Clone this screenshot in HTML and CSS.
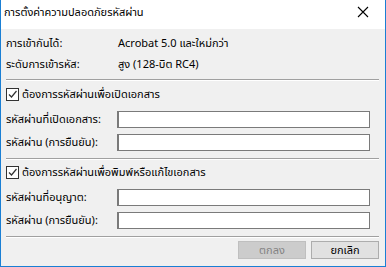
FILE: index.html
```html
<!DOCTYPE html>
<html>
  <head>
    <meta charset="utf-8" />
    <title>การตั้งค่าความปลอดภัยรหัสผ่าน</title>
    <link rel="stylesheet" href="styles.css">
  </head>
  <body>
    <div class="window">
      <div class="titlebar">
        <span class="title">การตั้งค่าความปลอดภัยรหัสผ่าน</span>
        <svg class="close" width="12" height="12" viewBox="0 0 12 12">
          <path d="M1 1 L11 11 M11 1 L1 11" stroke="#000" stroke-width="1.1" fill="none" />
        </svg>
      </div>

      <div class="content">
        <div class="info">
          <span>การเข้ากันได้:</span>
          <span>Acrobat 5.0 และใหม่กว่า</span>
          <span>ระดับการเข้ารหัส:</span>
          <span>สูง (128-บิต RC4)</span>
        </div>

        <div class="separator"></div>

        <label class="check-row first">
          <span class="checkbox">
            <svg width="11" height="11" viewBox="0 0 11 11">
              <path d="M2 5.5 L4.5 8 L9.5 2" stroke="#333" stroke-width="1.2" fill="none" />
            </svg>
          </span>
          ต้องการรหัสผ่านเพื่อเปิดเอกสาร
        </label>

        <div class="field-row">
          <span>รหัสผ่านที่เปิดเอกสาร:</span>
          <input type="password" class="field" />
        </div>
        <div class="field-row second">
          <span>รหัสผ่าน (การยืนยัน):</span>
          <input type="password" class="field" />
        </div>

        <div class="separator mid"></div>

        <label class="check-row">
          <span class="checkbox">
            <svg width="11" height="11" viewBox="0 0 11 11">
              <path d="M2 5.5 L4.5 8 L9.5 2" stroke="#333" stroke-width="1.2" fill="none" />
            </svg>
          </span>
          ต้องการรหัสผ่านเพื่อพิมพ์หรือแก้ไขเอกสาร
        </label>

        <div class="field-row">
          <span>รหัสผ่านที่อนุญาต:</span>
          <input type="password" class="field" />
        </div>
        <div class="field-row second">
          <span>รหัสผ่าน (การยืนยัน):</span>
          <input type="password" class="field" />
        </div>

        <div class="separator bottom"></div>

        <div class="buttons">
          <button class="btn" disabled>ตกลง</button>
          <button class="btn">ยกเลิก</button>
        </div>
      </div>
    </div>
  </body>
</html>
```

FILE: styles.css
```css
body {
  margin: 0;
  font-family: Tahoma, "Noto Sans Thai", "Noto Sans", "DejaVu Sans", sans-serif;
  font-size: 11px;
  color: #000;
}
.window {
  width: 384px;
  height: 266px;
  border: 1px solid #1a7fd4;
  border-top: none;
  background-color: #f0f0f0;
  display: flex;
  flex-direction: column;
}
.titlebar {
  height: 29px;
  background-color: #fff;
  display: flex;
  align-items: center;
  justify-content: space-between;
  padding: 0 16px 0 3px;
}
.title {
  font-size: 11px;
  margin-top: -4px;
}
.close {
  margin-top: -5px;
}
.content {
  padding: 4px 6px 0 5px;
  display: flex;
  flex-direction: column;
}
.info {
  display: grid;
  grid-template-columns: 112px 1fr;
  grid-auto-rows: 21px;
  align-items: center;
}
.separator {
  height: 0;
  border-top: 1px solid #a0a0a0;
  border-bottom: 1px solid #fff;
  margin-top: 4px;
}
.separator.mid {
  margin-top: 7px;
}
.separator.bottom {
  margin-top: 7px;
}
.check-row {
  display: flex;
  align-items: center;
  gap: 3px;
  height: 25px;
}
.check-row.first {
  height: 26px;
}
.checkbox {
  width: 11px;
  height: 11px;
  border: 1px solid #333;
  background-color: #fff;
  display: flex;
}
.field-row {
  display: flex;
  align-items: center;
  margin-top: 4px;
}
.field-row.second {
  margin-top: 6px;
}
.field-row span {
  width: 111px;
}
.field {
  width: 253px;
  height: 17px;
  box-sizing: border-box;
  border: 1px solid #7a7a7a;
  border-left-width: 2px;
  background-color: #fff;
  padding: 0 3px;
  margin: 0;
}
.buttons {
  display: flex;
  justify-content: flex-end;
  gap: 5px;
  margin-top: 3px;
}
.btn {
  width: 68px;
  height: 18px;
  font-family: inherit;
  font-size: 11px;
  background-color: #e1e1e1;
  border: 1px solid #adadad;
  color: #000;
  padding: 0;
}
.btn:disabled {
  background-color: #cccccc;
  border-color: #bfbfbf;
  color: #838383;
}
```
